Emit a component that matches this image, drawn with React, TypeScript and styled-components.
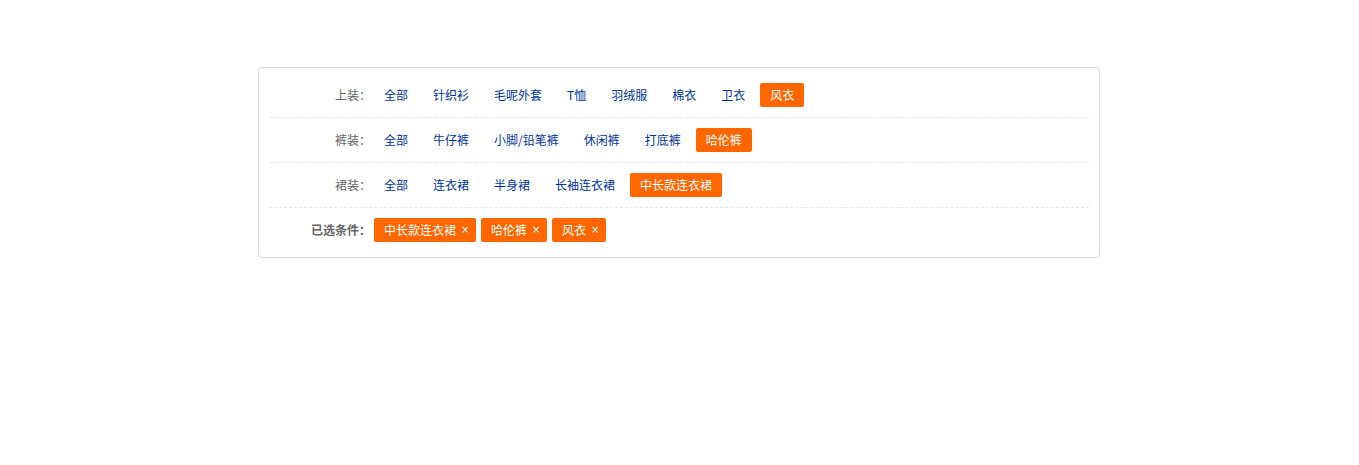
import React, { useState } from "react";
import styled, { createGlobalStyle } from "styled-components";

const GlobalStyle = createGlobalStyle`
  html, body { margin: 0; padding: 0; background: #fff; }
  body { font-family: "Noto Sans CJK SC", "Noto Sans", sans-serif; font-size: 12px; }
`;

const Page = styled.div`
  padding: 67px 1px 0 0;
`;

const Card = styled.div`
  width: 820px;
  margin: 0 auto;
  padding: 5px 10px;
  border: 1px solid #ddd;
  border-radius: 4px;
`;

const Row = styled.div<{ $last?: boolean }>`
  display: flex;
  align-items: center;
  height: 44px;
  border-bottom: ${(p) => (p.$last ? "none" : "1px dashed #e8e8e8")};
`;

const Label = styled.div<{ $bold?: boolean }>`
  width: 102px;
  flex: none;
  text-align: right;
  color: #666;
  font-weight: ${(p) => (p.$bold ? 700 : 400)};
  line-height: 24px;
`;

const Items = styled.div`
  display: flex;
  align-items: center;
  gap: 5px;
  margin-left: 3px;
`;

const Item = styled.a<{ $active?: boolean }>`
  display: block;
  height: 24px;
  line-height: 24px;
  padding: 0 10px;
  border-radius: 2px;
  color: ${(p) => (p.$active ? "#fff" : "#039")};
  background: ${(p) => (p.$active ? "#f60" : "transparent")};
  text-decoration: none;
  cursor: pointer;
  white-space: nowrap;
`;

const Tag = styled.span`
  display: flex;
  align-items: center;
  height: 24px;
  line-height: 24px;
  padding: 0 8px 0 10px;
  border-radius: 2px;
  background: #f60;
  color: #fff;
  white-space: nowrap;
`;

const Close = styled.span`
  display: inline-block;
  width: 7px;
  margin-left: 5px;
  text-align: center;
  font-family: "DejaVu Sans", sans-serif;
  font-size: 10px;
  cursor: pointer;
`;

type Group = { label: string; items: string[]; active: number };

const groups: Group[] = [
  {
    label: "上装：",
    items: ["全部", "针织衫", "毛呢外套", "T恤", "羽绒服", "棉衣", "卫衣", "风衣"],
    active: 7,
  },
  {
    label: "裤装：",
    items: ["全部", "牛仔裤", "小脚/铅笔裤", "休闲裤", "打底裤", "哈伦裤"],
    active: 5,
  },
  {
    label: "裙装：",
    items: ["全部", "连衣裙", "半身裙", "长袖连衣裙", "中长款连衣裙"],
    active: 4,
  },
];

export default function App() {
  const [sel, setSel] = useState<number[]>(groups.map((g) => g.active));
  const chosen = [2, 1, 0]
    .filter((gi) => sel[gi] > 0)
    .map((gi) => ({ gi, text: groups[gi].items[sel[gi]] }));

  return (
    <Page>
      <GlobalStyle />
      <Card>
        {groups.map((g, gi) => (
          <Row key={g.label}>
            <Label>{g.label}</Label>
            <Items>
              {g.items.map((it, ii) => (
                <Item
                  key={it}
                  $active={sel[gi] === ii}
                  onClick={() => setSel((s) => s.map((v, k) => (k === gi ? ii : v)))}
                >
                  {it}
                </Item>
              ))}
            </Items>
          </Row>
        ))}
        <Row $last>
          <Label $bold>已选条件：</Label>
          <Items>
            {chosen.map((c) => (
              <Tag key={c.gi}>
                {c.text}
                <Close onClick={() => setSel((s) => s.map((v, k) => (k === c.gi ? 0 : v)))}>×</Close>
              </Tag>
            ))}
          </Items>
        </Row>
      </Card>
    </Page>
  );
}
